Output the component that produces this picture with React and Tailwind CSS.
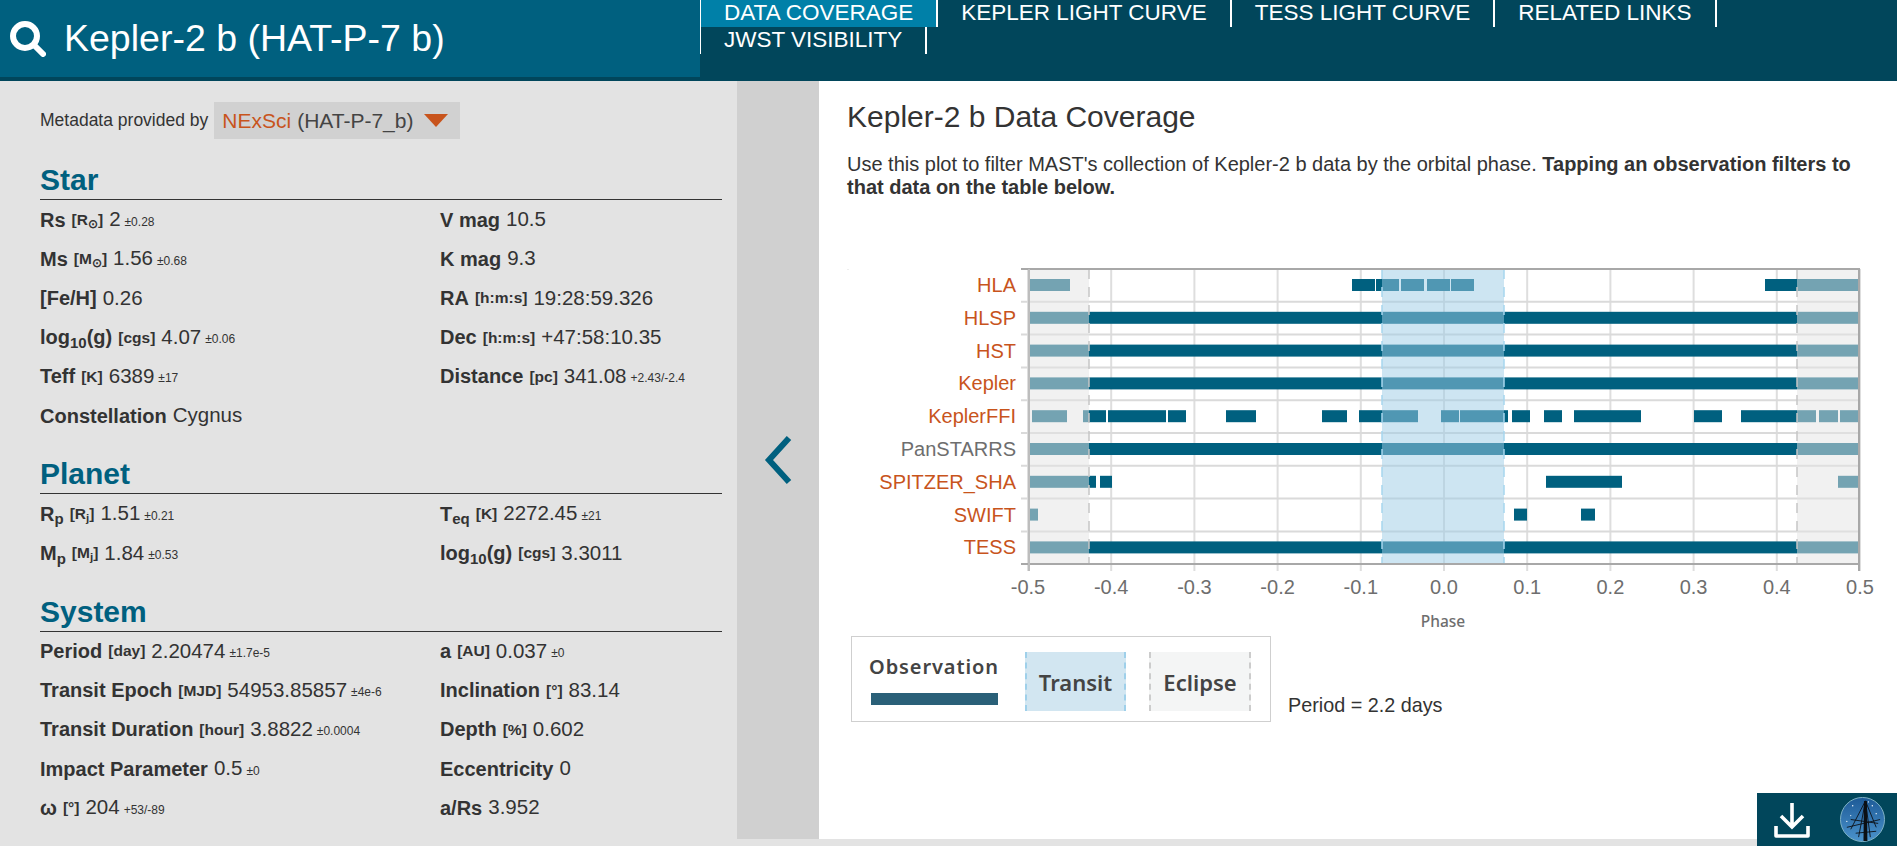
const SANS = { fontFamily: '"Liberation Sans", Arial, sans-serif' }

const TABS = ['DATA COVERAGE', 'KEPLER LIGHT CURVE', 'TESS LIGHT CURVE', 'RELATED LINKS', 'JWST VISIBILITY']

const FULL = [[1028, 1858]]
const ROWS = [
  { name: 'HLA', bars: [[1028, 1070], [1352, 1375], [1376, 1399], [1401, 1424], [1427, 1450], [1451, 1474], [1765, 1858]] },
  { name: 'HLSP', bars: FULL },
  { name: 'HST', bars: FULL },
  { name: 'Kepler', bars: FULL },
  {
    name: 'KeplerFFI',
    bars: [[1032, 1067], [1083, 1106], [1108, 1166], [1168, 1186], [1226, 1256], [1322, 1347], [1359, 1418], [1441, 1459], [1460, 1508], [1512, 1530], [1544, 1562], [1574, 1592], [1592, 1641], [1694, 1722], [1741, 1816], [1819, 1838], [1840, 1858]],
  },
  { name: 'PanSTARRS', bars: FULL, muted: true },
  { name: 'SPITZER_SHA', bars: [[1028, 1096], [1100, 1112], [1546, 1622], [1838, 1858]] },
  { name: 'SWIFT', bars: [[1028, 1038], [1514, 1527], [1581, 1595]] },
  { name: 'TESS', bars: FULL },
]
const TICKS = ['-0.5', '-0.4', '-0.3', '-0.2', '-0.1', '0.0', '0.1', '0.2', '0.3', '0.4', '0.5']

function CoverageChart() {
  const rowY = (i) => 270 + i * 32.8
  return (
    <svg viewBox="847 260 1050 375" width="1050" height="375" className="block shrink-0" style={SANS}>
      <rect x="847" y="270" width="2" height="1" fill="#eeeeee" />
      {TICKS.map((t, i) => {
        const x = 1028 + i * 83.2
        return (
          <g key={t}>
            <line x1={x} x2={x} y1="270" y2="572" stroke="#dedede" strokeWidth="2" />
            <text x={x} y="595" textAnchor="middle" fontSize="20" fill="#6e6e6e">{t}</text>
          </g>
        )
      })}
      {ROWS.map((r, i) => (
        <g key={r.name}>
          <line x1="1021" x2="1860" y1={rowY(i)} y2={rowY(i)} stroke="#dadada" strokeWidth="2" />
          <text x="1016" y={rowY(i) + 23} textAnchor="end" fontSize="20" fill={r.muted ? '#6e6e6e' : '#c8541c'}>{r.name}</text>
          {r.bars.map(([a, b]) => (
            <rect key={a} x={a} y={rowY(i) + 10} width={b - a} height="12" fill="#00607f" />
          ))}
        </g>
      ))}
      <rect x="1028" y="270" width="61" height="295" fill="#e3e3e3" fillOpacity="0.51" />
      <rect x="1797" y="270" width="63" height="295" fill="#e3e3e3" fillOpacity="0.51" />
      <rect x="1382" y="270" width="122" height="295" fill="#9dcce5" fillOpacity="0.51" />
      <g strokeWidth="1.5" strokeDasharray="10 8" fill="none">
        <line x1="1089" x2="1089" y1="270" y2="565" stroke="#c6c6c6" />
        <line x1="1797" x2="1797" y1="270" y2="565" stroke="#c6c6c6" />
        <line x1="1382" x2="1382" y1="270" y2="565" stroke="#a6d6ee" />
        <line x1="1504" x2="1504" y1="270" y2="565" stroke="#a6d6ee" />
      </g>
      <line x1="1021" x2="1860" y1="270" y2="270" stroke="#a8a8a8" strokeWidth="2" />
      <line x1="1021" x2="1860" y1="565" y2="565" stroke="#a8a8a8" strokeWidth="2" />
      <line x1="1029" x2="1029" y1="270" y2="572" stroke="#bdbdbd" strokeWidth="2" />
      <line x1="1859" x2="1859" y1="270" y2="572" stroke="#a8a8a8" strokeWidth="2" />
      <text x="1443" y="628" textAnchor="middle" fontSize="15.5" fontWeight="500" fill="#6e6e6e" style={{ fontFamily: '"Noto Sans", sans-serif' }}>Phase</text>
    </svg>
  )
}

function Stat({ label, unit, value, err }) {
  return (
    <div className="flex h-[39.2px] items-center whitespace-nowrap text-[20px] text-[#333]">
      <span className="font-bold">{label}</span>
      {unit && <span className="ml-[6px] text-[15.5px] font-bold">[{unit}]</span>}
      {value !== undefined && <span className="ml-[6px] text-[20.5px]">{value}</span>}
      {err && <span className="ml-[4px] mt-[4px] text-[12px]">{err}</span>}
    </div>
  )
}

function Section({ title, stats }) {
  return (
    <section className="mb-[19px]">
      <h3 className="h-[40px] border-b border-[#333] text-[30px] font-bold leading-[39px] text-[#00607f]">{title}</h3>
      <div className="grid grid-cols-[400px_1fr]">
        {stats.map((s, i) => (
          <Stat key={i} {...s} />
        ))}
      </div>
    </section>
  )
}

const LOG_G = <>log<sub className="text-[15px]">10</sub>(g)</>
const STAR = [
  { label: 'Rs', unit: <>R<sub>⊙</sub></>, value: '2', err: '±0.28' },
  { label: 'V mag', value: '10.5' },
  { label: 'Ms', unit: <>M<sub>⊙</sub></>, value: '1.56', err: '±0.68' },
  { label: 'K mag', value: '9.3' },
  { label: '[Fe/H]', value: '0.26' },
  { label: 'RA', unit: 'h:m:s', value: '19:28:59.326' },
  { label: LOG_G, unit: 'cgs', value: '4.07', err: '±0.06' },
  { label: 'Dec', unit: 'h:m:s', value: '+47:58:10.35' },
  { label: 'Teff', unit: 'K', value: '6389', err: '±17' },
  { label: 'Distance', unit: 'pc', value: '341.08', err: '+2.43/-2.4' },
  { label: 'Constellation', value: 'Cygnus' },
]
const PLANET = [
  { label: <>R<sub className="text-[15px]">p</sub></>, unit: <>R<sub>j</sub></>, value: '1.51', err: '±0.21' },
  { label: <>T<sub className="text-[15px]">eq</sub></>, unit: 'K', value: '2272.45', err: '±21' },
  { label: <>M<sub className="text-[15px]">p</sub></>, unit: <>M<sub>j</sub></>, value: '1.84', err: '±0.53' },
  { label: LOG_G, unit: 'cgs', value: '3.3011' },
]
const SYSTEM = [
  { label: 'Period', unit: 'day', value: '2.20474', err: '±1.7e-5' },
  { label: 'a', unit: 'AU', value: '0.037', err: '±0' },
  { label: 'Transit Epoch', unit: 'MJD', value: '54953.85857', err: '±4e-6' },
  { label: 'Inclination', unit: '°', value: '83.14' },
  { label: 'Transit Duration', unit: 'hour', value: '3.8822', err: '±0.0004' },
  { label: 'Depth', unit: '%', value: '0.602' },
  { label: 'Impact Parameter', value: '0.5', err: '±0' },
  { label: 'Eccentricity', value: '0' },
  { label: 'ω', unit: '°', value: '204', err: '+53/-89' },
  { label: 'a/Rs', value: '3.952' },
]

function MastLogo() {
  return (
    <svg viewBox="0 0 48 48" width="47" height="47">
      <defs>
        <linearGradient id="sky" x1="0" y1="0" x2="0" y2="1">
          <stop offset="0" stopColor="#1d5a97" />
          <stop offset="1" stopColor="#4b93cc" />
        </linearGradient>
      </defs>
      <circle cx="24" cy="24" r="22.5" fill="url(#sky)" stroke="#7fb2c6" strokeWidth="1" />
      <g fill="#ffffff">
        <circle cx="14" cy="10" r="0.7" /><circle cx="34" cy="10" r="0.7" /><circle cx="38" cy="18" r="0.7" />
        <circle cx="12" cy="20" r="0.6" /><circle cx="30" cy="6" r="0.6" /><circle cx="8" cy="26" r="0.6" />
      </g>
      <g stroke="#0b0f14" fill="none" strokeWidth="0.9">
        <path d="M27 5 L12 34 M27 5 L38 32 M27 5 L20 42 M27 5 L32 42" />
        <path d="M8 32 L42 24 M12 24 L40 28 M17 38 L38 36" />
      </g>
      <path d="M25.5 5 L28.5 5 L29 46 L25 46 Z" fill="#0b0f14" />
    </svg>
  )
}

export default function App() {
  return (
    <div className="relative flex h-[846px] w-full flex-col overflow-hidden bg-[#e3e3e3]" style={SANS}>
      <header className="flex h-[81px] shrink-0 bg-[#01465b]">
        <div className="flex h-[77px] w-[700px] items-center bg-[#00607f] pl-[10px] text-white">
          <svg width="36" height="36" viewBox="0 0 36 36" fill="none" stroke="white" className="shrink-0">
            <circle cx="15" cy="15" r="12" strokeWidth="6" />
            <line x1="24" y1="24" x2="33" y2="33" strokeWidth="6" strokeLinecap="round" />
          </svg>
          <h1 className="ml-[18px] text-[37.5px] leading-none">Kepler-2 b (HAT-P-7 b)</h1>
        </div>
        <nav className="flex flex-1 flex-wrap content-start">
          {TABS.map((t, i) => (
            <a
              key={t}
              className={`block h-[27px] whitespace-nowrap border-r-2 border-white px-[23px] text-[22.5px] leading-[25px] text-white ${i === 0 ? 'border-l bg-[#0080a8]' : ''} ${i === 4 ? 'border-l' : ''}`}
            >
              {t}
            </a>
          ))}
        </nav>
      </header>

      <div className="flex h-[758px] shrink-0">
        <aside className="h-[765px] w-[737px] shrink-0 pl-[40px] pr-[15px] pt-[21px]">
          <div className="mb-[21px] flex h-[37px] items-center">
            <span className="text-[17.5px] text-[#333]">Metadata provided by</span>
            <div className="ml-[6px] flex h-[37px] w-[246px] items-center bg-[#d1d1d1] pl-[8px] text-[21px] text-[#444]">
              <span className="text-[#c8541c]">NExSci</span>
              <span className="ml-[6px]">(HAT-P-7_b)</span>
              <span className="ml-[11px] h-0 w-0 border-x-[12px] border-t-[13px] border-x-transparent border-t-[#c8541c]" />
            </div>
          </div>
          <Section title="Star" stats={STAR} />
          <Section title="Planet" stats={PLANET} />
          <Section title="System" stats={SYSTEM} />
        </aside>

        <button className="flex w-[82px] shrink-0 items-center justify-center bg-[#d0d0d0]">
          <svg width="28" height="50" viewBox="0 0 28 50" fill="none" stroke="#00607f" strokeWidth="6">
            <polyline points="25,3 5,25 25,47" />
          </svg>
        </button>

        <main className="flex flex-1 flex-col bg-white pl-[28px]">
          <h2 className="mt-[18px] text-[30px] leading-[36px] text-[#333]">Kepler-2 b Data Coverage</h2>
          <p className="mt-[18px] w-[1020px] text-[20px] leading-[23px] text-[#333]">
            Use this plot to filter MAST's collection of Kepler-2 b data by the orbital phase.{' '}
            <b>Tapping an observation filters to that data on the table below.</b>
          </p>
          <div className="mt-[60px]">
            <CoverageChart />
          </div>
          <div className="mt-[2px] flex items-start">
            <div className="ml-[4px] flex h-[86px] w-[420px] items-start border border-[#cfcfcf] pl-[17px] pt-[15px] text-[#444]" style={{ fontFamily: '"Noto Sans", sans-serif' }}>
              <div className="w-[131px]">
                <div className="text-[20px] font-semibold leading-[30px] tracking-[0.9px]">Observation</div>
                <div className="ml-[2px] mt-[11px] h-[12px] w-[127px] bg-[#2a6078]" />
              </div>
              <div className="ml-[25px] flex h-[59px] w-[101px] items-center justify-center border-x-2 border-dashed border-[#9fd0ea] bg-[#d2e6f1] text-[22px] font-semibold leading-none">Transit</div>
              <div className="ml-[23px] flex h-[59px] w-[102px] items-center justify-center border-x-2 border-dashed border-[#cccccc] bg-[#f4f5f5] text-[22px] font-semibold leading-none">Eclipse</div>
            </div>
            <span className="ml-[17px] mt-[56px] text-[19.8px] leading-[26px] text-[#333]">Period = 2.2 days</span>
          </div>
        </main>
      </div>

      <div className="absolute bottom-0 right-0 flex h-[53px] w-[140px] items-center bg-[#01465b]">
        <svg width="36" height="38" viewBox="0 0 36 38" fill="none" stroke="white" strokeWidth="3.6" className="ml-[17px]">
          <path d="M18 2 V26 M7 15 L18 26 L29 15" />
          <path d="M2 25 V35 H34 V25" strokeLinejoin="round" />
        </svg>
        <div className="ml-[29px]">
          <MastLogo />
        </div>
      </div>
    </div>
  )
}
